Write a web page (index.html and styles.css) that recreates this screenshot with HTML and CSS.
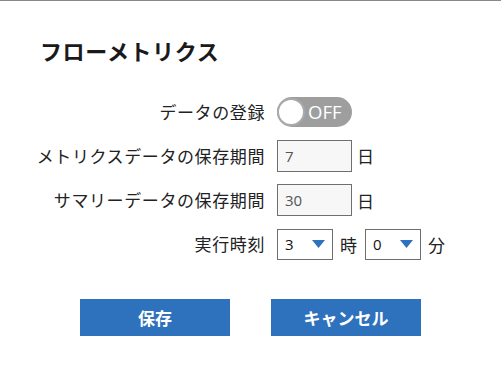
FILE: index.html
```html
<!DOCTYPE html>
<html lang="ja">
<head>
    <meta charset="UTF-8">
    <title>フローメトリクス</title>
    <link rel="stylesheet" href="styles.css">
</head>
<body>
    <div class="dialog">
        <h1>フローメトリクス</h1>
        <div class="settings">
            <div class="label">データの登録</div>
            <div class="control">
                <div class="toggle"><span class="knob"></span><span class="toggle-text">OFF</span></div>
            </div>

            <div class="label">メトリクスデータの保存期間</div>
            <div class="control">
                <input class="days" type="text" value="7">
                <span class="unit">日</span>
            </div>

            <div class="label">サマリーデータの保存期間</div>
            <div class="control">
                <input class="days" type="text" value="30">
                <span class="unit">日</span>
            </div>

            <div class="label">実行時刻</div>
            <div class="control time">
                <div class="select"><span>3</span><svg width="13" height="8" viewBox="0 0 13 8"><path d="M0 0 H13 L6.5 8 Z" fill="#2f72bd"/></svg></div>
                <span class="unit">時</span>
                <div class="select"><span>0</span><svg width="13" height="8" viewBox="0 0 13 8"><path d="M0 0 H13 L6.5 8 Z" fill="#2f72bd"/></svg></div>
                <span class="unit">分</span>
            </div>
        </div>
        <div class="buttons">
            <button class="btn">保存</button>
            <button class="btn">キャンセル</button>
        </div>
    </div>
</body>
</html>
```

FILE: styles.css
```css
body {
    margin: 0;
    font-family: "Noto Sans CJK JP", "Noto Sans", sans-serif;
    color: #222;
    background-color: #fff;
}
.dialog {
    border-top: 1px solid #888;
    padding: 33px 0 0 0;
    height: 340px;
}
h1 {
    margin: 0 0 0 40px;
    font-size: 22px;
    line-height: 33px;
    font-weight: bold;
    letter-spacing: 0.6px;
    color: #1a1a1a;
}
.settings {
    display: grid;
    grid-template-columns: 265px auto;
    column-gap: 12px;
    row-gap: 12.5px;
    margin-top: 30px;
    align-items: center;
}
.label {
    text-align: right;
    font-size: 17px;
    line-height: 24px;
    letter-spacing: 0.6px;
}
.control {
    display: flex;
    align-items: center;
    gap: 6px;
}
.control.time {
    gap: 8px;
}
.toggle {
    position: relative;
    width: 75px;
    height: 30px;
    border-radius: 15px;
    background-color: #9e9e9e;
    box-sizing: border-box;
}
.knob {
    position: absolute;
    left: 0;
    top: 1px;
    width: 28px;
    height: 28px;
    border-radius: 50%;
    background-color: #fff;
    border: 2px solid #aaa;
    box-sizing: border-box;
}
.toggle-text {
    position: absolute;
    left: 31px;
    top: 0;
    line-height: 30px;
    color: #fff;
    font-size: 18.5px;
    font-family: "Open Sans", "Noto Sans", sans-serif;
}
.days {
    width: 75px;
    height: 32px;
    box-sizing: border-box;
    border: 1px solid #6f6f6f;
    background-color: #f7f7f7;
    padding: 0 7px;
    font-family: "Open Sans", "Noto Sans", sans-serif;
    font-size: 15px;
    color: #555;
}
.unit {
    font-size: 17px;
    margin-left: -1px;
}
.select {
    display: flex;
    align-items: center;
    justify-content: space-between;
    width: 56px;
    height: 31px;
    box-sizing: border-box;
    border: 1px solid #6f6f6f;
    padding: 0 7px 0 7px;
    font-family: "Open Sans", "Noto Sans", sans-serif;
    font-size: 15px;
    color: #111;
}
.buttons {
    display: flex;
    justify-content: center;
    gap: 41px;
    margin-top: 39px;
}
.btn {
    width: 150px;
    height: 37px;
    border: none;
    background-color: #2e71bc;
    color: #fff;
    font-family: "Noto Sans CJK JP", sans-serif;
    font-size: 17px;
    font-weight: bold;
    cursor: pointer;
}
```
